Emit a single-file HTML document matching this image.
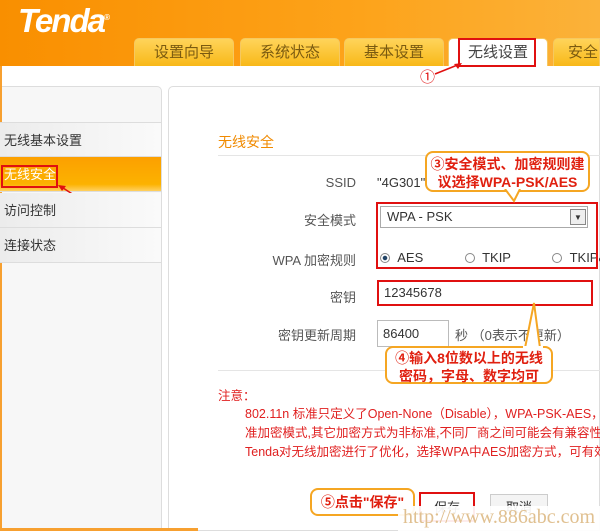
<!DOCTYPE html>
<html style="width:600px;height:531px;overflow:hidden"><head><meta charset="utf-8"><style>
*{margin:0;padding:0;box-sizing:border-box}
body{width:600px;height:531px;overflow:hidden;background:#fff;font-family:"Liberation Sans","Noto Sans CJK SC",sans-serif;position:relative;font-size:12px;color:#333}
.a{position:absolute}
.hdr{left:0;top:0;width:600px;height:66px;background:linear-gradient(90deg,#f98f00,#fda31a 60%,#fbb23a)}
.logo{left:18px;top:0px;font:italic bold 33px/36px "Liberation Sans",sans-serif;color:#fff;letter-spacing:-2px}
.tab{top:38px;height:28px;background:linear-gradient(#ffd45a,#f8b818);border:1px solid #f6c860;border-bottom:none;border-radius:5px 5px 0 0;font-size:15px;color:#7a5a10;text-align:center;line-height:28px}
.side{left:0;top:86px;width:162px;height:445px;border:1px solid #ddd;border-left:none;border-radius:0 5px 0 0;background:#f7f7f7}
.row{left:0;width:161px;height:35px;border-bottom:1px solid #ddd;line-height:35px;font-size:13px;padding-left:4px;background:linear-gradient(90deg,#ececec,#fafafa)}
.main{left:168px;top:86px;width:440px;height:445px;border:1px solid #ddd;border-radius:5px 0 0 0}
.lbl{width:140px;text-align:right;font-size:13px;color:#555}
.red{border:2px solid #e01010}
.call{border:2px solid #f5a623;background:#fff;border-radius:8px;color:#e02010;font-weight:bold;font-size:14px;text-align:center;line-height:18px}
.note{color:#e02020;font-size:12.5px;line-height:19px;white-space:nowrap}
</style></head><body>
<div class="a hdr"></div>
<div class="a logo">Tenda<sup style="font-size:8px">®</sup></div>
<div class="a tab" style="left:134px;width:100px">设置向导</div>
<div class="a tab" style="left:240px;width:100px">系统状态</div>
<div class="a tab" style="left:344px;width:100px">基本设置</div>
<div class="a tab" style="left:448px;width:100px;background:#fff;color:#444">无线设置</div>
<div class="a tab" style="left:553px;width:47px;text-align:left;padding-left:14px;border-radius:5px 0 0 0">安全</div>
<div class="a red" style="left:458px;top:38px;width:78px;height:29px"></div>
<div class="a" style="left:420px;top:66px;color:#e01010;font-size:15px">①</div>
<svg class="a" style="left:430px;top:60px" width="40" height="20"><line x1="5" y1="14" x2="30" y2="4" stroke="#e01010" stroke-width="1.5"/><path d="M32 3 L24 4 L28 9Z" fill="#e01010"/></svg>
<div class="a side" style="height:445px"></div>
<div class="a" style="left:0;top:66px;width:2px;height:465px;background:#f7a030"></div>
<div class="a row" style="top:122px;border-top:1px solid #ddd">无线基本设置</div>
<div class="a row" style="top:157px;background:linear-gradient(#fca000,#fcb200 80%,#ffd060);color:#fff">无线安全</div>
<div class="a red" style="left:1px;top:165px;width:57px;height:23px"></div>
<div class="a" style="left:72px;top:193px;color:#e01010;font-size:15px">②</div>
<svg class="a" style="left:55px;top:183px" width="30" height="20"><line x1="22" y1="14" x2="5" y2="3" stroke="#e01010" stroke-width="1.5"/><path d="M3 2 L11 3 L7 8Z" fill="#e01010"/></svg>
<div class="a row" style="top:193px">访问控制</div>
<div class="a row" style="top:228px">连接状态</div>
<div class="a main" style="width:432px"></div>
<div class="a" style="left:218px;top:132px;color:#f08a00;font-size:14px">无线安全</div>
<div class="a" style="left:218px;top:155px;width:382px;height:1px;background:#e5e5e5"></div>
<div class="a lbl" style="left:216px;top:175px">SSID</div>
<div class="a" style="left:377px;top:175px;font-size:13px">"4G301"</div>
<div class="a lbl" style="left:216px;top:210px">安全模式</div>
<div class="a" style="left:380px;top:206px;width:208px;height:22px;border:1px solid #aaa;font-size:13px;line-height:20px;padding-left:6px">WPA - PSK</div>
<div class="a" style="left:570px;top:209px;width:16px;height:16px;border:1px solid #888;background:#eee;font-size:8px;text-align:center;line-height:15px">▼</div>
<div class="a lbl" style="left:216px;top:250px">WPA 加密规则</div>
<div class="a" style="left:380px;top:250px;width:220px;overflow:hidden;font-size:13px;white-space:nowrap"><span style="display:inline-block;width:10px;height:10px;border:1px solid #888;border-radius:50%;background:radial-gradient(#246 35%,#fff 45%);vertical-align:-1px"></span> &nbsp;AES <span style="display:inline-block;width:10px;height:10px;border:1px solid #888;border-radius:50%;margin-left:38px;vertical-align:-1px"></span> &nbsp;TKIP <span style="display:inline-block;width:10px;height:10px;border:1px solid #888;border-radius:50%;margin-left:38px;vertical-align:-1px"></span> &nbsp;TKIP&amp;AES</div>
<div class="a red" style="left:376px;top:202px;width:222px;height:67px"></div>
<div class="a lbl" style="left:216px;top:287px">密钥</div>
<div class="a red" style="left:377px;top:280px;width:216px;height:26px;font-size:13px;line-height:22px;padding-left:5px">12345678</div>
<div class="a lbl" style="left:216px;top:325px">密钥更新周期</div>
<div class="a" style="left:377px;top:320px;width:72px;height:27px;border:1px solid #bbb;font-size:13px;line-height:25px;padding-left:5px">86400</div>
<div class="a" style="left:455px;top:325px;font-size:13px;color:#555">秒 （0表示不更新）</div>
<div class="a" style="left:218px;top:370px;width:382px;height:1px;background:#e5e5e5"></div>
<div class="a call" style="left:425px;top:151px;width:165px;height:41px;padding-top:2px">③安全模式、加密规则建<br>议选择WPA-PSK/AES</div>
<svg class="a" style="left:500px;top:189px" width="30" height="15"><path d="M5 0 L14 12 L20 0" fill="#fff" stroke="#f5a623" stroke-width="2"/></svg>
<div class="a call" style="left:385px;top:346px;width:168px;height:38px;padding-top:1px">④输入8位数以上的无线<br>密码，字母、数字均可</div>
<svg class="a" style="left:520px;top:300px" width="30" height="50"><path d="M5 48 L14 3 L20 48" fill="#fff" stroke="#f5a623" stroke-width="2"/><rect x="3" y="46" width="20" height="4" fill="#fff"/></svg>
<div class="a note" style="left:218px;top:387px">注意：</div>
<div class="a note" style="left:245px;top:405px;width:355px;overflow:hidden">802.11n 标准只定义了Open-None（Disable），WPA-PSK-AES，WPA<br>准加密模式,其它加密方式为非标准,不同厂商之间可能会有兼容性问题<br>Tenda对无线加密进行了优化，选择WPA中AES加密方式，可有效防</div>
<div class="a" style="left:419px;top:492px;width:56px;height:30px;border:2px solid #e01010;font-size:13px;text-align:center;line-height:28px">保存</div>
<div class="a" style="left:490px;top:494px;width:58px;height:28px;border:1px solid #ccc;background:#f4f4f4;font-size:13px;text-align:center;line-height:26px">取消</div>
<div class="a call" style="left:310px;top:488px;width:105px;height:28px;line-height:24px">⑤点击"保存"</div>
<div class="a" style="left:398px;top:506px;width:202px;height:25px;overflow:hidden;background:rgba(255,255,255,.92);font:20px 'Liberation Serif',serif;color:#e0c090;padding-left:5px;white-space:nowrap">http://www.886abc.com</div>
<div class="a" style="left:0;top:528px;width:198px;height:3px;background:#f7a030"></div>
</body></html>
